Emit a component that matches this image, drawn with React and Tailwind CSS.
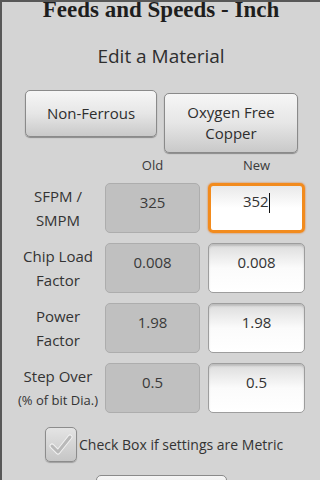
const rows = [
  { label: ["SFPM /", "SMPM"], old: "325", value: "352", focused: true },
  { label: ["Chip Load", "Factor"], old: "0.008", value: "0.008" },
  { label: ["Power", "Factor"], old: "1.98", value: "1.98" },
  { label: ["Step Over", "(% of bit Dia.)"], old: "0.5", value: "0.5", small: true },
];

function Button({ className, children }) {
  return (
    <div
      className={`flex flex-col items-center justify-center rounded-[5px] border border-[#8a8a8a] bg-linear-to-b from-[#f6f6f6] via-[#e6e6e6] to-[#c9c9c9] text-[15px] leading-[21px] text-[#2e2e2e] shadow-[0_1px_1px_rgba(0,0,0,0.35)] ${className}`}
    >
      {children}
    </div>
  );
}

function Row({ row }) {
  return (
    <>
      <div className="flex h-[50px] flex-col items-center justify-center pl-[17px] text-[15px] leading-[24px] whitespace-nowrap text-[#333]">
        <span>{row.label[0]}</span>
        <span className={row.small ? "text-[13px]" : ""}>{row.label[1]}</span>
      </div>
      <div className="h-[50px] rounded-[5px] border border-[#adadad] bg-[#c0c0c0] pt-[8px] text-center text-[15px] leading-[20px] text-[#3a3a3a]">
        {row.old}
      </div>
      {row.focused ? (
        <div className="h-[50px] rounded-[5px] border-[3px] border-[#f28b1d] bg-linear-to-b from-[#e9e9e9] via-white to-white pt-[5px] text-center text-[15px] leading-[20px] text-[#333] shadow-[0_0_2px_#e0701a]">
          {row.value}
          <span className="inline-block h-[20px] w-[1.5px] bg-[#111] align-middle" />
        </div>
      ) : (
        <div className="h-[50px] rounded-[5px] border border-[#9d9d9d] bg-linear-to-b from-[#dcdcdc] via-[#fbfbfb] to-white pt-[8px] text-center text-[15px] leading-[20px] text-[#333] shadow-[inset_0_2px_2px_rgba(0,0,0,0.15)]">
          {row.value}
        </div>
      )}
    </>
  );
}

export default function App() {
  return (
    <div className="h-[480px] w-[320px] overflow-hidden border-t-2 border-l-2 border-[#585858] bg-[#d4d4d4] font-['Open_Sans',sans-serif] text-[#333]">
      <div className="-mt-[2px] h-[19px] text-center font-['Liberation_Serif',serif] text-[23px] leading-[20px] font-bold text-[#1e1e1e]">
        Feeds and Speeds - Inch
      </div>

      <div className="mt-[25px] text-center text-[19px] leading-[24px] text-[#2e2e2e]">Edit a Material</div>

      <div className="mt-[22px] flex items-start gap-[7px] pl-[23px]">
        <Button className="h-[47px] w-[132px]">Non-Ferrous</Button>
        <Button className="mt-[3px] h-[60px] w-[134px]">
          <span>Oxygen Free</span>
          <span>Copper</span>
        </Button>
      </div>

      <div className="mt-[4px] grid grid-cols-[95px_95px_97px] gap-x-[8px] text-[13px] leading-[16px] text-[#3a3a3a]">
        <div />
        <div className="text-center">Old</div>
        <div className="text-center">New</div>
      </div>

      <div className="mt-[10px] grid grid-cols-[95px_95px_97px] gap-x-[8px] gap-y-[10px]">
        {rows.map((row) => (
          <Row key={row.old + row.label[0]} row={row} />
        ))}
      </div>

      <div className="mt-[14px] flex items-center pl-[43px]">
        <div className="flex h-[35px] w-[32px] items-center justify-center rounded-[5px] border border-[#8c8c8c] bg-linear-to-b from-[#e4e4e4] to-[#c6c6c6] shadow-[0_1px_1px_rgba(0,0,0,0.25)]">
          <svg width="24" height="22" viewBox="0 0 24 22">
            <path d="M3 12 L9 18 L21 3" fill="none" stroke="#f2f2f2" strokeWidth="5" strokeLinecap="round" strokeLinejoin="round" />
            <path d="M3 12 L9 18 L21 3" fill="none" stroke="#b9b9b9" strokeWidth="3" strokeLinecap="round" strokeLinejoin="round" />
          </svg>
        </div>
        <span className="ml-[2px] text-[14px] leading-[20px] text-[#333]">Check Box if settings are Metric</span>
      </div>

      <div className="mt-[13px] ml-[94px] h-[48px] w-[131px] rounded-[5px] border border-[#8a8a8a] bg-linear-to-b from-[#f6f6f6] to-[#c9c9c9]" />
    </div>
  );
}
